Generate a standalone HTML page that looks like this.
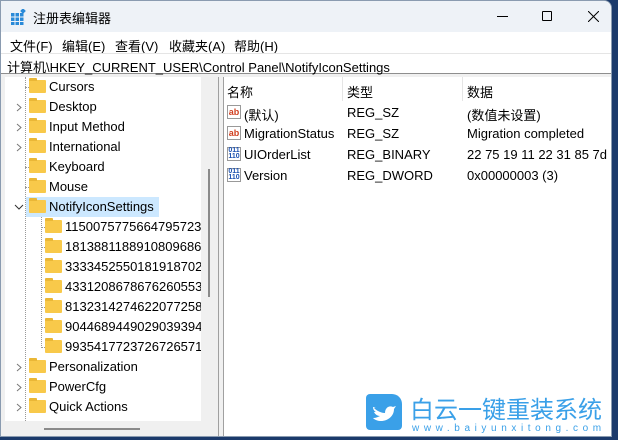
<!DOCTYPE html><html><head><style>
*{margin:0;padding:0;box-sizing:border-box}
body{width:618px;height:440px;overflow:hidden;background:#1b3a6b;font-family:"Liberation Sans","Noto Sans CJK SC",sans-serif;font-size:13px;color:#000;position:relative}
.win{position:absolute;left:0;top:0;width:612px;height:437px;background:#f0f0f0;border:1px solid #8a9bb0;border-radius:0 8px 0 0;overflow:hidden}
.title{position:absolute;left:0;top:0;width:100%;height:31px;background:#eef2f7}
.title .t{position:absolute;left:32px;top:7px;font-size:13px}
.menu{position:absolute;top:31px;left:0;width:100%;height:21px;background:#fff}
.menu span{position:absolute;top:4px}
.addr{position:absolute;top:52px;left:0;width:100%;height:21px;background:#fff;border-top:1px solid #e5e5e5;border-bottom:1px solid #8e8e8e;padding:3px 0 0 6px;white-space:nowrap}
.tree{position:absolute;left:4px;top:76px;width:196px;height:344px;background:#fff;overflow:hidden}
.row{position:absolute;height:20px;white-space:nowrap}
.fold{position:absolute;width:17px;height:13px;background:#f8c94a;border-radius:1px;top:3px}
.fold:before{content:"";position:absolute;left:0;top:-2px;width:8px;height:3px;background:#eab736;border-radius:1px 1px 0 0}
.lbl{position:absolute;top:2px}
.chev{position:absolute;left:10px;top:6px}
.right{position:absolute;left:222px;top:76px;width:390px;height:361px;background:#fff;border-left:1px solid #a0a0a0}
.rc{position:absolute;white-space:nowrap}
.ic{position:absolute;width:14px;height:14px;font-size:9px;font-weight:bold;line-height:13px;text-align:center;border:1px solid #999;background:#fff}
</style></head><body>
<div class="win">
<div class="title">
<svg style="position:absolute;left:10px;top:8px" width="16" height="16"><g fill="#2a8ad8"><rect x="0" y="4" width="3.5" height="3.5"/><rect x="4.5" y="4" width="3.5" height="3.5"/><rect x="9" y="4" width="3.5" height="3.5"/><rect x="0" y="8.5" width="3.5" height="3.5"/><rect x="4.5" y="8.5" width="3.5" height="3.5"/><rect x="9" y="8.5" width="3.5" height="3.5"/><rect x="0" y="13" width="3.5" height="3"/><rect x="4.5" y="13" width="3.5" height="3"/><rect x="9" y="13" width="3.5" height="3"/></g><rect x="10" y="0" width="4" height="4" fill="#2a8ad8" transform="rotate(45 12 2)"/></svg>
<span class="t">注册表编辑器</span>
<div style="position:absolute;left:496px;top:15px;width:11px;height:1px;background:#000"></div>
<div style="position:absolute;left:541px;top:10px;width:10px;height:10px;border:1px solid #000;border-radius:1px"></div>
<svg style="position:absolute;left:587px;top:10px" width="11" height="11"><path d="M0 0L11 11M11 0L0 11" stroke="#000" stroke-width="1"/></svg>
</div>
<div class="menu"><span style="left:9px">文件(F)</span><span style="left:61px">编辑(E)</span><span style="left:114px">查看(V)</span><span style="left:168px">收藏夹(A)</span><span style="left:233px">帮助(H)</span></div>
<div class="addr">计算机\HKEY_CURRENT_USER\Control Panel\NotifyIconSettings</div>
<div class="tree">
<div style="position:absolute;left:20px;top:0;height:344px;border-left:1px dotted #999"></div>
<div style="position:absolute;left:36px;top:140px;height:131px;border-left:1px dotted #999"></div>
<div class="row" style="top:0;left:0"><span style="position:absolute;left:20px;top:10px;width:6px;border-top:1px dotted #999"></span><div class="fold" style="left:24px"></div><span class="lbl" style="left:44px">Cursors</span></div>
<div class="row" style="top:20px"><svg class="chev" width="8" height="9"><path d="M2 1l4 3.5-4 3.5" stroke="#777" fill="none"/></svg><div class="fold" style="left:24px"></div><span class="lbl" style="left:44px">Desktop</span></div>
<div class="row" style="top:40px"><svg class="chev" width="8" height="9"><path d="M2 1l4 3.5-4 3.5" stroke="#777" fill="none"/></svg><div class="fold" style="left:24px"></div><span class="lbl" style="left:44px">Input Method</span></div>
<div class="row" style="top:60px"><svg class="chev" width="8" height="9"><path d="M2 1l4 3.5-4 3.5" stroke="#777" fill="none"/></svg><div class="fold" style="left:24px"></div><span class="lbl" style="left:44px">International</span></div>
<div class="row" style="top:80px"><span style="position:absolute;left:20px;top:10px;width:6px;border-top:1px dotted #999"></span><div class="fold" style="left:24px"></div><span class="lbl" style="left:44px">Keyboard</span></div>
<div class="row" style="top:100px"><span style="position:absolute;left:20px;top:10px;width:6px;border-top:1px dotted #999"></span><div class="fold" style="left:24px"></div><span class="lbl" style="left:44px">Mouse</span></div>
<div style="position:absolute;left:21px;top:120px;width:133px;height:20px;background:#cce8ff"></div>
<div class="row" style="top:120px"><svg class="chev" style="left:9px;top:7px" width="10" height="7"><path d="M1 1l4 4 4-4" stroke="#333" fill="none"/></svg><div class="fold" style="left:24px"></div><span class="lbl" style="left:44px">NotifyIconSettings</span></div>
<div class="row" style="top:140px"><span style="position:absolute;left:37px;top:10px;width:5px;border-top:1px dotted #999"></span><div class="fold" style="left:40px"></div><span class="lbl" style="left:60px">11500757756647957232</span></div>
<div class="row" style="top:160px"><span style="position:absolute;left:37px;top:10px;width:5px;border-top:1px dotted #999"></span><div class="fold" style="left:40px"></div><span class="lbl" style="left:60px">18138811889108096860</span></div>
<div class="row" style="top:180px"><span style="position:absolute;left:37px;top:10px;width:5px;border-top:1px dotted #999"></span><div class="fold" style="left:40px"></div><span class="lbl" style="left:60px">3333452550181918702</span></div>
<div class="row" style="top:200px"><span style="position:absolute;left:37px;top:10px;width:5px;border-top:1px dotted #999"></span><div class="fold" style="left:40px"></div><span class="lbl" style="left:60px">4331208678676260553</span></div>
<div class="row" style="top:220px"><span style="position:absolute;left:37px;top:10px;width:5px;border-top:1px dotted #999"></span><div class="fold" style="left:40px"></div><span class="lbl" style="left:60px">8132314274622077258</span></div>
<div class="row" style="top:240px"><span style="position:absolute;left:37px;top:10px;width:5px;border-top:1px dotted #999"></span><div class="fold" style="left:40px"></div><span class="lbl" style="left:60px">9044689449029039394</span></div>
<div class="row" style="top:260px"><span style="position:absolute;left:37px;top:10px;width:5px;border-top:1px dotted #999"></span><div class="fold" style="left:40px"></div><span class="lbl" style="left:60px">9935417723726726571</span></div>
<div class="row" style="top:280px"><svg class="chev" width="8" height="9"><path d="M2 1l4 3.5-4 3.5" stroke="#777" fill="none"/></svg><div class="fold" style="left:24px"></div><span class="lbl" style="left:44px">Personalization</span></div>
<div class="row" style="top:300px"><svg class="chev" width="8" height="9"><path d="M2 1l4 3.5-4 3.5" stroke="#777" fill="none"/></svg><div class="fold" style="left:24px"></div><span class="lbl" style="left:44px">PowerCfg</span></div>
<div class="row" style="top:320px"><svg class="chev" width="8" height="9"><path d="M2 1l4 3.5-4 3.5" stroke="#777" fill="none"/></svg><div class="fold" style="left:24px"></div><span class="lbl" style="left:44px">Quick Actions</span></div>
</div>
<div style="position:absolute;left:207px;top:168px;width:2px;height:128px;background:#8a8a8a"></div>
<div style="position:absolute;left:43px;top:427px;width:96px;height:2px;background:#8a8a8a"></div>
<div style="position:absolute;left:217px;top:76px;width:1px;height:361px;background:#a0a0a0"></div>
<div class="right">
<div style="position:absolute;left:118px;top:0;width:1px;height:24px;background:#e5e5e5"></div>
<div style="position:absolute;left:238px;top:0;width:1px;height:24px;background:#e5e5e5"></div>
<span class="rc" style="left:3px;top:5px">名称</span><span class="rc" style="left:123px;top:5px">类型</span><span class="rc" style="left:243px;top:5px">数据</span>
<div class="ic" style="left:3px;top:28px;color:#d04020">ab</div><span class="rc" style="left:20px;top:28px">(默认)</span><span class="rc" style="left:123px;top:28px">REG_SZ</span><span class="rc" style="left:243px;top:28px">(数值未设置)</span>
<div class="ic" style="left:3px;top:49px;color:#d04020">ab</div><span class="rc" style="left:20px;top:49px">MigrationStatus</span><span class="rc" style="left:123px;top:49px">REG_SZ</span><span class="rc" style="left:243px;top:49px">Migration completed</span>
<div class="ic" style="left:3px;top:70px;color:#1a50b0;font-size:7px;line-height:6px">011<br>110</div><span class="rc" style="left:20px;top:70px">UIOrderList</span><span class="rc" style="left:123px;top:70px">REG_BINARY</span><span class="rc" style="left:243px;top:70px">22 75 19 11 22 31 85 7d c</span>
<div class="ic" style="left:3px;top:91px;color:#1a50b0;font-size:7px;line-height:6px">011<br>110</div><span class="rc" style="left:20px;top:91px">Version</span><span class="rc" style="left:123px;top:91px">REG_DWORD</span><span class="rc" style="left:243px;top:91px">0x00000003 (3)</span>
</div>
</div>
<div style="position:absolute;left:366px;top:394px;width:36px;height:36px;background:#3aa0e8;border-radius:4px 10px 4px 4px"><svg width="36" height="36"><path d="M8 14c3 3 7 5 11 5 0-5 4-8 8-6l3-1-2 3c0 7-6 12-13 12-3 0-6-1-8-3 3 0 5-1 7-2-3 0-5-2-6-4h2c-2-1-3-3-3-5 1 0 2 1 3 1z" fill="#fff"/></svg></div>
<div style="position:absolute;left:410px;top:394px;font-size:24px;color:#3aa0e8;font-family:'Noto Sans CJK SC',sans-serif;line-height:28px">白云一键重装系统</div>
<div style="position:absolute;left:412px;top:423px;font-size:10px;color:#3aa0e8;letter-spacing:4.6px">www.baiyunxitong.com</div>
</body></html>
